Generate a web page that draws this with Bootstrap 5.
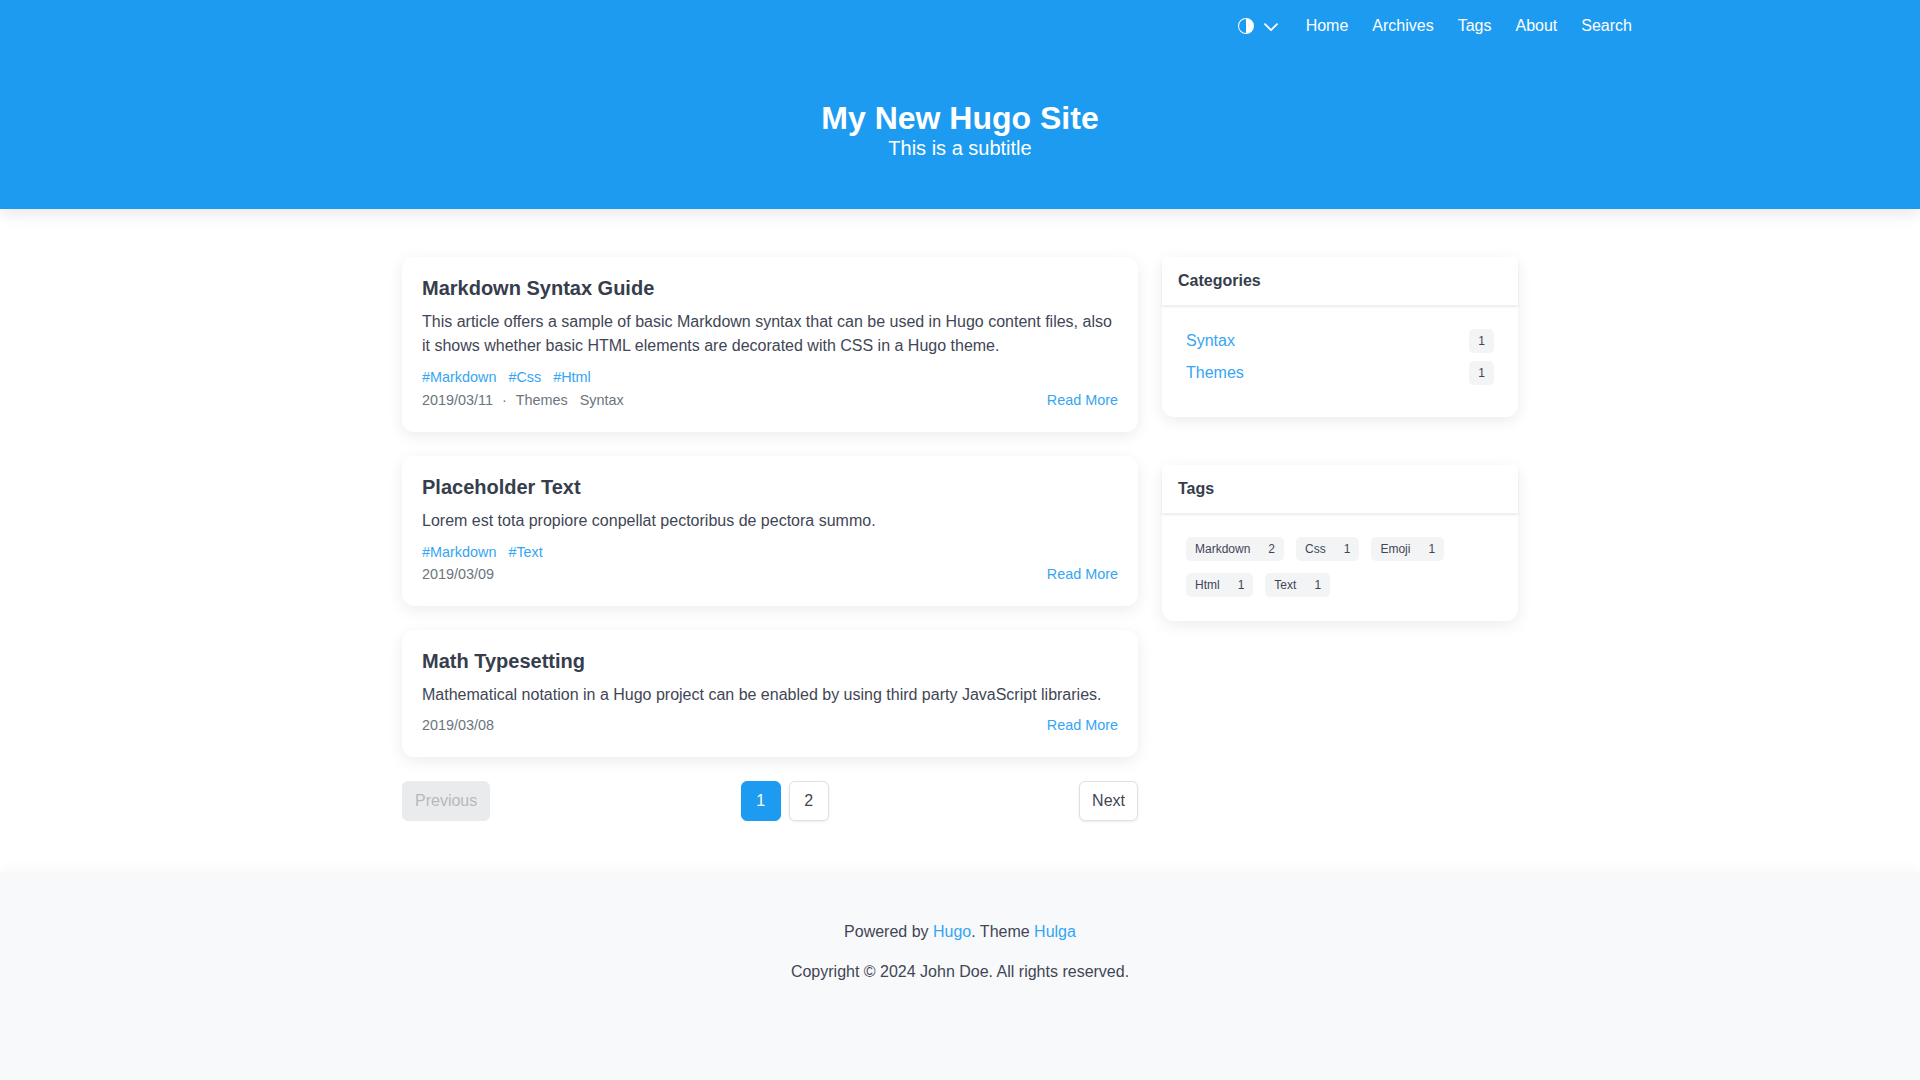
<!DOCTYPE html>
<html lang="en">
<head>
  <meta charset="UTF-8">
  <title>My New Hugo Site</title>
  <link href="https://cdn.jsdelivr.net/npm/bootstrap@5.3.3/dist/css/bootstrap.min.css" rel="stylesheet">
  <style>
    body {
      font-family: "Liberation Sans", Arial, sans-serif;
      color: #3f4655;
      background: #fff;
      min-height: 1080px;
      display: flex;
      flex-direction: column;
    }
    a { color: #35a5f4; text-decoration: none; }
    .site-header {
      background: #1d9bf0;
      height: 209px;
      box-shadow: 0 4px 16px rgba(0,0,0,.1);
      color: #fff;
    }
    .site-nav { max-width: 1368px; height: 52px; }
    .site-nav .nav-link { color: #fff; padding: 0 12px; line-height: 52px; }
    .theme-toggle { padding: 0; margin-right: 15px; gap: 9px; border: 0; background: none; }
    .site-title { font-size: 32px; font-weight: 700; line-height: 38px; margin: 0; }
    .site-subtitle { font-size: 20px; line-height: 22px; margin: 0; }
    .hero { padding-top: 47px; }
    .main-wrap { padding-top: 48px; max-width: 1140px; }
    .post-card, .side-card {
      border: 0;
      border-radius: 12px;
      box-shadow: 0 4px 16px rgba(0,0,0,.08);
    }
    .post-card { margin-bottom: 24px; }
    .post-card .card-body { padding: 17px 20px 21px; }
    .post-title { font-size: 20px; font-weight: 700; line-height: 28px; margin: 0 0 8px; color: #363d4c; }
    .post-text { line-height: 24px; margin: 0 0 7px; }
    .post-tags { font-size: 14.4px; line-height: 21.5px; margin-top: 9px; }
    .post-tags a { margin-right: 12px; }
    .post-meta { font-size: 14.4px; line-height: 22px; color: #6c757d; }
    .meta-dot { margin: 0 9px; }
    .meta-cat { margin-left: 12px; }
    .pager-btn {
      height: 40px;
      line-height: 38px;
      padding: 0 12px;
      border: 1px solid #dee2e6;
      border-radius: 6px;
      background: #fff;
      color: #3f4655;
      box-shadow: 0 1px 3px rgba(0,0,0,.08);
    }
    .pager-num { width: 40px; padding: 0; text-align: center; }
    .pager-num.active { background: #1d9bf0; border-color: #1d9bf0; color: #fff; box-shadow: none; }
    .pager-btn.off { background: #eaebec; border-color: #eaebec; color: #b5b9be; box-shadow: none; }
    .side-card { margin-bottom: 48px; }
    .side-card .card-header {
      height: 48px;
      line-height: 47px;
      padding: 0 16px;
      font-weight: 700;
      color: #363d4c;
      background: #fff;
      border-bottom: 0;
      box-shadow: 0 2px 3px rgba(0,0,0,.08);
    }
    .side-card .card-body { padding: 24px; }
    .cat-row { height: 24px; margin-bottom: 8px; line-height: 24px; }
    .cat-count {
      width: 25px;
      height: 24px;
      border-radius: 5px;
      background: #f3f4f6;
      font-size: 12px;
      text-align: center;
    }
    .tag-list { gap: 12px; }
    .tag-chip {
      height: 24px;
      line-height: 24px;
      padding: 0 9px;
      border-radius: 5px;
      background: #f3f4f6;
      font-size: 12px;
      color: #3f4655;
      gap: 18px;
    }
    .site-footer {
      margin-top: auto;
      height: 208px;
      background: #f8f9fb;
      box-shadow: 0 -4px 12px rgba(0,0,0,.03);
      padding-top: 48px;
    }
    .site-footer p { line-height: 24px; margin-bottom: 16px; }
  </style>
</head>
<body>
  <header class="site-header">
    <nav class="site-nav mx-auto d-flex justify-content-end align-items-center">
      <button class="theme-toggle d-flex align-items-center" type="button" aria-label="Theme">
        <svg width="16" height="16" viewBox="0 0 16 16" fill="#fff"><path d="M8 1a7 7 0 1 0 0 14V1zm0-1a8 8 0 1 1 0 16A8 8 0 0 1 8 0z"/></svg>
        <svg width="16" height="16" viewBox="0 0 16 16" fill="none" stroke="#fff" stroke-width="1.8" stroke-linecap="round" stroke-linejoin="round"><path d="M2 6.2l6 6 6-6"/></svg>
      </button>
      <a class="nav-link" href="#">Home</a>
      <a class="nav-link" href="#">Archives</a>
      <a class="nav-link" href="#">Tags</a>
      <a class="nav-link" href="#">About</a>
      <a class="nav-link" href="#">Search</a>
    </nav>
    <div class="hero text-center">
      <h1 class="site-title">My New Hugo Site</h1>
      <p class="site-subtitle">This is a subtitle</p>
    </div>
  </header>

  <div class="container main-wrap">
    <div class="row">
      <div class="col-8">
        <div class="card post-card">
          <div class="card-body">
            <h2 class="post-title">Markdown Syntax Guide</h2>
            <p class="post-text">This article offers a sample of basic Markdown syntax that can be used in Hugo content files, also it shows whether basic HTML elements are decorated with CSS in a Hugo theme.</p>
            <div class="post-tags"><a href="#">#Markdown</a><a href="#">#Css</a><a href="#">#Html</a></div>
            <div class="post-meta d-flex justify-content-between">
              <span>2019/03/11<span class="meta-dot">·</span>Themes<span class="meta-cat">Syntax</span></span>
              <a href="#">Read More</a>
            </div>
          </div>
        </div>
        <div class="card post-card">
          <div class="card-body">
            <h2 class="post-title">Placeholder Text</h2>
            <p class="post-text">Lorem est tota propiore conpellat pectoribus de pectora summo.</p>
            <div class="post-tags"><a href="#">#Markdown</a><a href="#">#Text</a></div>
            <div class="post-meta d-flex justify-content-between">
              <span>2019/03/09</span>
              <a href="#">Read More</a>
            </div>
          </div>
        </div>
        <div class="card post-card">
          <div class="card-body">
            <h2 class="post-title">Math Typesetting</h2>
            <p class="post-text">Mathematical notation in a Hugo project can be enabled by using third party JavaScript libraries.</p>
            <div class="post-meta d-flex justify-content-between">
              <span>2019/03/08</span>
              <a href="#">Read More</a>
            </div>
          </div>
        </div>
        <div class="d-flex justify-content-between">
          <a class="pager-btn off" href="#">Previous</a>
          <div class="d-flex gap-2">
            <a class="pager-btn pager-num active" href="#">1</a>
            <a class="pager-btn pager-num" href="#">2</a>
          </div>
          <a class="pager-btn" href="#">Next</a>
        </div>
      </div>
      <div class="col-4">
        <div class="card side-card">
          <div class="card-header">Categories</div>
          <div class="card-body">
            <div class="cat-row d-flex justify-content-between"><a href="#">Syntax</a><span class="cat-count">1</span></div>
            <div class="cat-row d-flex justify-content-between"><a href="#">Themes</a><span class="cat-count">1</span></div>
          </div>
        </div>
        <div class="card side-card">
          <div class="card-header">Tags</div>
          <div class="card-body">
            <div class="tag-list d-flex flex-wrap">
              <a class="tag-chip d-flex" href="#"><span>Markdown</span><span>2</span></a>
              <a class="tag-chip d-flex" href="#"><span>Css</span><span>1</span></a>
              <a class="tag-chip d-flex" href="#"><span>Emoji</span><span>1</span></a>
              <a class="tag-chip d-flex" href="#"><span>Html</span><span>1</span></a>
              <a class="tag-chip d-flex" href="#"><span>Text</span><span>1</span></a>
            </div>
          </div>
        </div>
      </div>
    </div>
  </div>

  <footer class="site-footer text-center">
    <p>Powered by <a href="#">Hugo</a>. Theme <a href="#">Hulga</a></p>
    <p>Copyright © 2024 John Doe. All rights reserved.</p>
  </footer>
</body>
</html>
